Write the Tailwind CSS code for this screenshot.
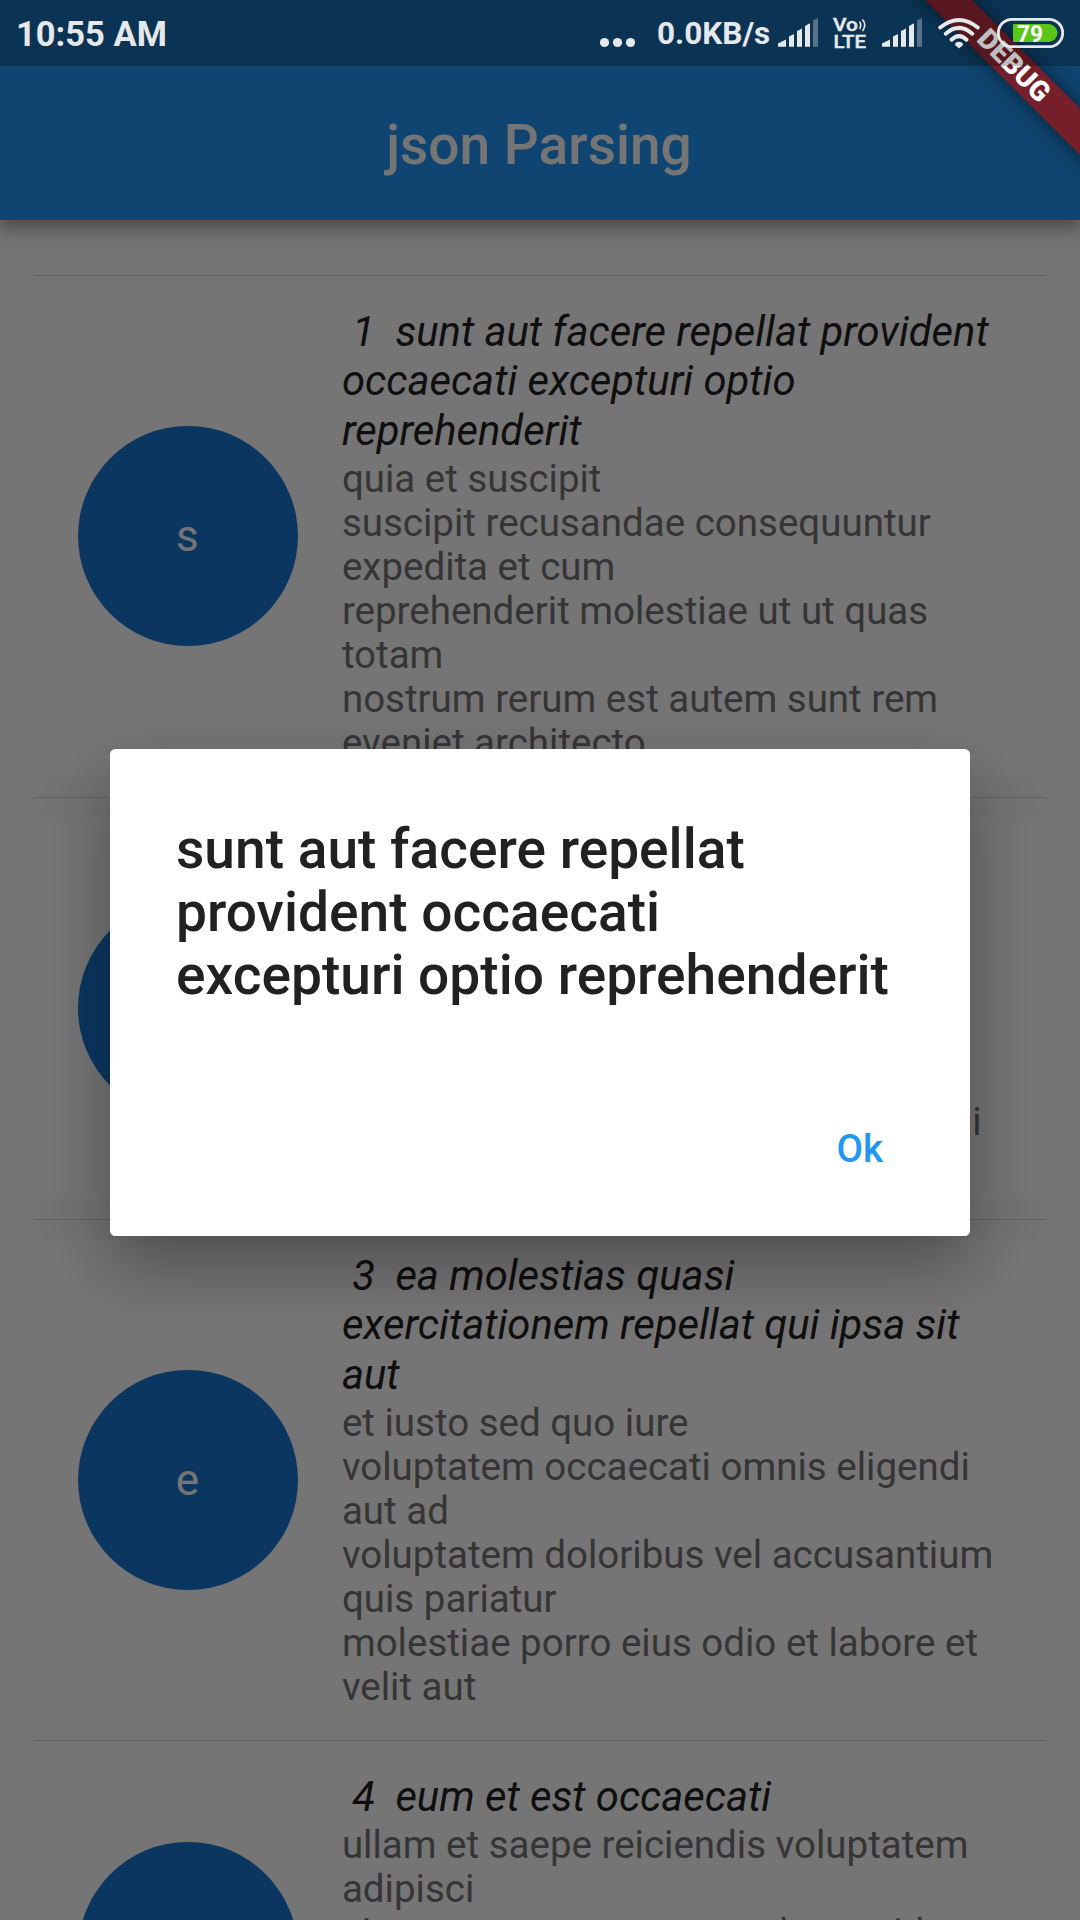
<!DOCTYPE html>
<html lang="en">
<head>
<meta charset="utf-8">
<title>json Parsing</title>
<script src="https://cdn.jsdelivr.net/npm/@tailwindcss/browser@4"></script>
</head>
<body class="bg-[#fafafa]">
<div class="relative w-[1080px] h-[1920px] overflow-hidden bg-[#fafafa] font-['Roboto',sans-serif]">

  <!-- App bar -->
  <header class="relative h-[220px] pt-[69px] pr-[2px] flex items-center justify-center bg-[#2196f3] shadow-[0_8px_16px_rgba(0,0,0,0.36)]">
    <h1 class="text-[55px] leading-[64px] font-medium text-white">json Parsing</h1>
  </header>

  <!-- Post list -->
  <main class="px-[34.4px] pt-[55px]">
    <div class="h-px bg-black/15"></div>
    <article class="mt-[20.5px] h-[479px] px-[44px] flex items-center gap-[43.5px] bg-white">
      <div class="size-[220px] shrink-0 rounded-full bg-[#1976d2] flex items-center justify-center pr-[2px] text-[44px] text-white">s</div>
      <div>
        <h2 class="whitespace-pre pb-[2px] text-[41.75px] leading-[49.5px] italic text-[#212121]"> 1  sunt aut facere repellat provident
occaecati excepturi optio
reprehenderit</h2>
        <p class="whitespace-pre text-[38.5px] leading-[44px] text-[#757575]">quia et suscipit
suscipit recusandae consequuntur
expedita et cum
reprehenderit molestiae ut ut quas
totam
nostrum rerum est autem sunt rem
eveniet architecto</p>
      </div>
    </article>
    <div class="mt-[21px] h-px bg-black/15"></div>
    <article class="mt-[21px] h-[379px] px-[44px] flex items-center gap-[43.5px] bg-white">
      <div class="size-[220px] shrink-0 rounded-full bg-[#1976d2] flex items-center justify-center pr-[2px] text-[44px] text-white">q</div>
      <div>
        <h2 class="whitespace-pre pb-[2px] text-[41.75px] leading-[49.5px] italic text-[#212121]"> 2  qui est esse</h2>
        <p class="whitespace-pre text-[38.5px] leading-[44px] text-[#757575]">est rerum tempore vitae
sequi sint nihil reprehenderit dolor
beatae ea dolores neque
fugiat blanditiis voluptate porro vel
nihil molestiae ut reiciendis
qui aperiam non debitis possimus qui
neque nisi nulla</p>
      </div>
    </article>
    <div class="mt-[21px] h-px bg-black/15"></div>
    <article class="mt-[21px] h-[478.5px] px-[44px] flex items-center gap-[43.5px] bg-white">
      <div class="size-[220px] shrink-0 rounded-full bg-[#1976d2] flex items-center justify-center pr-[2px] text-[44px] text-white">e</div>
      <div>
        <h2 class="whitespace-pre pb-[2px] text-[41.75px] leading-[49.5px] italic text-[#212121]"> 3  ea molestias quasi
exercitationem repellat qui ipsa sit
aut</h2>
        <p class="whitespace-pre text-[38.5px] leading-[44px] text-[#757575]">et iusto sed quo iure
voluptatem occaecati omnis eligendi
aut ad
voluptatem doloribus vel accusantium
quis pariatur
molestiae porro eius odio et labore et
velit aut</p>
      </div>
    </article>
    <div class="mt-[21px] h-px bg-black/15"></div>
    <article class="mt-[21px] h-[379px] px-[44px] flex items-center gap-[43.5px] bg-white">
      <div class="size-[220px] shrink-0 rounded-full bg-[#1976d2] flex items-center justify-center pr-[2px] text-[44px] text-white">e</div>
      <div>
        <h2 class="whitespace-pre pb-[2px] text-[41.75px] leading-[49.5px] italic text-[#212121]"> 4  eum et est occaecati</h2>
        <p class="whitespace-pre text-[38.5px] leading-[44px] text-[#757575]">ullam et saepe reiciendis voluptatem
adipisci
sit amet autem assumenda provident
rerum culpa
quis hic commodi nesciunt rem
tenetur doloremque ipsam iure
quis sunt voluptatem rerum illo velit</p>
      </div>
    </article>
  </main>

  <!-- Scrim and dialog -->
  <div class="absolute inset-0 bg-black/54"></div>
  <section class="absolute left-[110px] top-[749.4px] w-[860px] h-[487px] rounded-[5.5px] bg-white px-[66px] pt-[69px] pb-[43px] flex flex-col justify-between shadow-[0_30px_66px_rgba(0,0,0,0.32)]">
    <h2 class="whitespace-pre text-[55.1px] leading-[63px] font-medium text-[#212121]">sunt aut facere repellat
provident occaecati
excepturi optio reprehenderit</h2>
    <button class="self-end mr-[21px] h-[88px] text-[38.5px] leading-[44px] font-medium text-[#2196f3]">Ok</button>
  </section>

  <!-- Debug ribbon -->
  <div class="absolute left-[814.25px] top-[49.25px] w-[400px] h-[33px] rotate-45 bg-[#761f2a] shadow-[0_0_20px_rgba(0,0,0,0.5)] flex items-center justify-center text-[28px] leading-[33px] font-black text-white">DEBUG</div>

  <!-- System status bar -->
  <div class="absolute inset-x-0 top-0 h-[66px] bg-black/25 flex items-center pl-[16px] text-[#e6e9ec]">
    <span class="text-[34.5px] leading-[40px] font-bold mt-[1px]">10:55 AM</span>
    <svg class="ml-auto" width="38" height="66" viewBox="0 0 38 66" fill="currentColor"><circle cx="5.5" cy="42.5" r="4.6"/><circle cx="18.5" cy="42.5" r="4.6"/><circle cx="31.5" cy="42.5" r="4.6"/></svg>
    <span class="ml-[20px] mt-[1px] w-[120px] text-[31.5px] leading-[40px] font-bold">0.0KB/s</span>
    <svg width="303" height="66" viewBox="777 0 303 66" fill="currentColor">
      <g id="signal"><path d="M778 46.7V43.5L786 39.5V46.7zM789 46.7V36.5L794 34V46.7zM797 46.7V31L802 28.5V46.7zM805 46.7V26L810 23.3V46.7z"/><path opacity=".35" d="M813 46.7V20.5L818 18V46.7z"/></g>
      <use href="#signal" x="104"/>
      <text x="833" y="30.7" font-size="17.8" font-weight="500" stroke="currentColor" stroke-width=".4" textLength="25" lengthAdjust="spacingAndGlyphs">Vo</text>
      <path d="M859.5 21.5q2.5 3.500 0 7.500M862.500 19.500q4.500 5.500 0 11.500" fill="none" stroke="currentColor" stroke-width="1.600"/>
      <text x="833.5" y="47.7" font-size="17.5" font-weight="500" stroke="currentColor" stroke-width=".4" textLength="32.500" lengthAdjust="spacingAndGlyphs">LTE</text>
      <g fill="none" stroke="currentColor" stroke-width="4" stroke-linecap="round"><path d="M940.200 27.500Q959 12.500 977.800 27.500"/><path d="M945.700 33.700Q959 22 972.300 33.700"/><path d="M951.500 39.700Q959 32.500 966.500 39.700"/></g>
      <path d="M955 45Q955 41.800 959 41.800T963 45L959 48.500z"/>
      <path d="M1013 25a1 1 0 0 1 1-1H1048.500a9 9 0 0 1 0 18H1014a1 1 0 0 1-1-1z" fill="#5ac51a"/>
      <rect x="998.300" y="19.300" width="64.400" height="27.400" rx="13.700" fill="none" stroke="currentColor" stroke-width="2.800"/>
      <text x="1017" y="41.500" font-size="23" font-weight="700" fill="#fff" textLength="26" lengthAdjust="spacingAndGlyphs">79</text>
    </svg>
  </div>
</div>
</body>
</html>
